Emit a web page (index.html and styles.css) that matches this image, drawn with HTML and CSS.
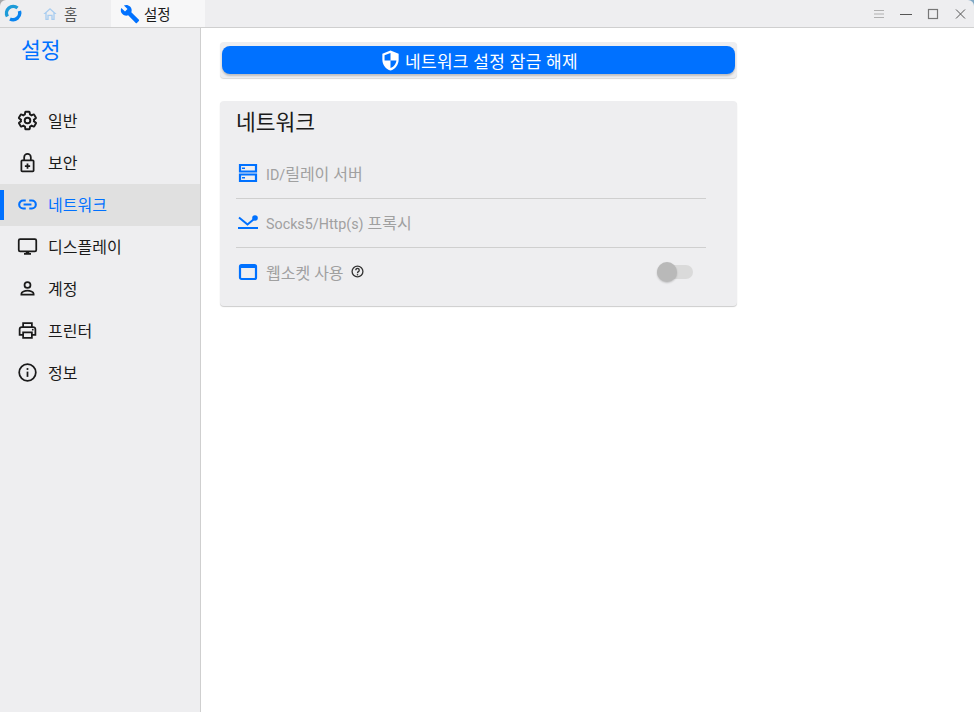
FILE: index.html
```html
<!DOCTYPE html>
<html lang="ko">
<head>
<meta charset="utf-8">
<title>설정</title>
<link rel="stylesheet" href="styles.css">
</head>
<body>
<div class="window">
  <header class="titlebar">
    <svg class="logo" viewBox="0 0 18 18" width="18" height="18"><path d="M3.400 12.500A6.700 6.700 0 0 1 13.500 4" fill="none" stroke="#1d9bd8" stroke-width="3.400"/><path d="M15.400 7A6.700 6.700 0 0 1 6 15" fill="none" stroke="#0a84f0" stroke-width="3.400"/></svg>
    <div class="tab tab-home">
      <svg viewBox="0 0 24 24" width="16" height="16"><path d="M12 3 2 12h3v9h5v-6h4v6h5v-9h3z M7 19v-8.800l5-4.500 5 4.500V19h-1v-6H8v6z" fill="#a9cdf0" fill-rule="evenodd"/></svg>
      <span>홈</span>
    </div>
    <div class="tab tab-active">
      <svg viewBox="0 0 24 24" width="20" height="20"><path d="M22.700 19 13.600 9.900c.9-2.300.4-5-1.500-6.900-2-2-5-2.400-7.400-1.300L9 6 6 9 1.600 4.700C.4 7.100.9 10.100 2.900 12.100c1.900 1.900 4.600 2.400 6.900 1.500l9.100 9.100c.4.400 1 .4 1.400 0l2.300-2.300c.5-.4.500-1.100.1-1.400z" fill="#0071ff"/></svg>
      <span>설정</span>
    </div>
    <div class="spacer"></div>
    <div class="winctl">
      <svg viewBox="0 0 12 12" width="12" height="12"><path d="M1 2.500h10M1 6h10M1 9.500h10" stroke="#b0b0b0" stroke-width="1"/></svg>
      <svg viewBox="0 0 12 12" width="12" height="12"><path d="M0 6.500h12" stroke="#555" stroke-width="1"/></svg>
      <svg viewBox="0 0 12 12" width="12" height="12"><rect x="1.500" y="1.500" width="9" height="9" fill="none" stroke="#777" stroke-width="1.200"/></svg>
      <svg viewBox="0 0 12 12" width="12" height="12"><path d="M2 1.500l9 9M11 1.500l-9 9" stroke="#555" stroke-width="1"/></svg>
    </div>
  </header>
  <div class="body">
    <aside class="sidebar">
      <div class="side-title">설정</div>
      <nav class="nav">
        <div class="nav-item">
          <svg class="nav-icon" viewBox="0 0 24 24"><path d="M19.400 13c.1-.3.1-.7.1-1s0-.7-.1-1l2.100-1.600c.2-.2.2-.4.1-.6l-2-3.500c-.1-.2-.4-.3-.6-.2l-2.500 1c-.5-.4-1.100-.7-1.700-1l-.4-2.700c0-.2-.2-.4-.5-.4h-4c-.2 0-.4.2-.5.4l-.4 2.700c-.6.3-1.200.6-1.700 1l-2.500-1c-.2-.1-.5 0-.6.2l-2 3.500c-.1.2-.1.4.1.6L4.500 11c-.1.3-.1.7-.1 1s0 .7.1 1l-2.100 1.600c-.2.2-.2.4-.1.6l2 3.500c.1.2.4.3.6.2l2.500-1c.5.4 1.100.7 1.700 1l.4 2.700c0 .2.2.4.5.4h4c.2 0 .4-.2.5-.4l.4-2.700c.6-.3 1.200-.6 1.700-1l2.500 1c.2.1.5 0 .6-.2l2-3.500c.1-.2.1-.4-.1-.6z" fill="none" stroke="#1a1a1a" stroke-width="2.200"/><circle cx="12" cy="12" r="3.200" fill="none" stroke="#1a1a1a" stroke-width="2.200"/></svg>
          <span>일반</span>
        </div>
        <div class="nav-item">
          <svg class="nav-icon" viewBox="0 0 24 24"><path d="M6 9.500h12a1 1 0 0 1 1 1V21a1 1 0 0 1-1 1H6a1 1 0 0 1-1-1V10.500a1 1 0 0 1 1-1z M8.200 9.500V6a3.800 3.800 0 0 1 7.600 0v3.500 M12 13v6 M9 16h6" fill="none" stroke="#1a1a1a" stroke-width="2"/></svg>
          <span>보안</span>
        </div>
        <div class="nav-item selected">
          <svg class="nav-icon" viewBox="0 0 24 24"><path d="M10 7.500H7a4.500 4.500 0 0 0 0 9h3 M14 7.500h3a4.500 4.500 0 0 1 0 9h-3 M7.500 12h9" fill="none" stroke="#0071ff" stroke-width="2.400"/></svg>
          <span>네트워크</span>
        </div>
        <div class="nav-item">
          <svg class="nav-icon" viewBox="0 0 24 24"><path d="M3.500 3.500h17a1.500 1.500 0 0 1 1.500 1.500v11a1.500 1.500 0 0 1-1.500 1.500h-17A1.500 1.500 0 0 1 2 16V5a1.500 1.500 0 0 1 1.500-1.500z" fill="none" stroke="#1a1a1a" stroke-width="2"/><path d="M10 17.500h4v2h2v2H8v-2h2z" fill="#1a1a1a"/></svg>
          <span>디스플레이</span>
        </div>
        <div class="nav-item">
          <svg class="nav-icon" viewBox="0 0 24 24"><circle cx="12" cy="8" r="3.400" fill="none" stroke="#1a1a1a" stroke-width="2"/><path d="M5 19v-1c0-2 4-3.500 7-3.500s7 1.500 7 3.500v1z" fill="none" stroke="#1a1a1a" stroke-width="2"/></svg>
          <span>계정</span>
        </div>
        <div class="nav-item">
          <svg class="nav-icon" viewBox="0 0 24 24"><path d="M7 8V3.500h10V8 M7 17H3v-6.500A2.500 2.500 0 0 1 5.500 8h13a2.500 2.500 0 0 1 2.500 2.500V17h-4 M7 14h10v6.500H7z" fill="none" stroke="#1a1a1a" stroke-width="2"/><circle cx="18" cy="11" r="1" fill="#1a1a1a"/></svg>
          <span>프린터</span>
        </div>
        <div class="nav-item">
          <svg class="nav-icon" viewBox="0 0 24 24"><circle cx="12" cy="12" r="9.500" fill="none" stroke="#1a1a1a" stroke-width="2"/><path d="M12 11v6" stroke="#1a1a1a" stroke-width="2"/><circle cx="12" cy="8" r="1.200" fill="#1a1a1a"/></svg>
          <span>정보</span>
        </div>
      </nav>
    </aside>
    <main class="main">
      <section class="unlock-card">
        <button class="unlock-btn">
          <svg viewBox="0 0 24 24" width="23" height="23"><path d="M12 1.500 3.500 5v6c0 5.400 3.600 10.300 8.500 11.500 4.900-1.200 8.500-6.100 8.500-11.500V5z" fill="#fff"/><path d="M12 4.200v7.800H5.800V6.500zM12 12h6.200c-.5 3.700-3 6.900-6.200 7.900z" fill="#0071ff"/></svg>
          <span>네트워크 설정 잠금 해제</span>
        </button>
      </section>
      <section class="card">
        <h2 class="card-title">네트워크</h2>
        <div class="row row-first">
          <svg class="row-icon" viewBox="0 0 20 20"><path d="M2 2h16v6.500H2z M2 11.500h16V18H2z" fill="none" stroke="#0071ff" stroke-width="2.200"/><path d="M4 4.500h3v1.500H4zM4 14h3v1.500H4z" fill="#0071ff"/></svg>
          <span class="label"><span class="latin">ID/</span>릴레이 서버</span>
        </div>
        <div class="row">
          <svg class="row-icon" viewBox="0 0 20 20"><path d="M0 16h20" stroke="#0071ff" stroke-width="2"/><path d="M1 5.500l8.500 7 6-5" fill="none" stroke="#0071ff" stroke-width="2"/><circle cx="17" cy="6" r="2.800" fill="#0071ff"/></svg>
          <span class="label"><span class="latin">Socks5/Http(s)</span> 프록시</span>
        </div>
        <div class="row row-last">
          <svg class="row-icon" viewBox="0 0 20 20"><rect x="2" y="3" width="16" height="14" rx="1.500" fill="none" stroke="#0071ff" stroke-width="2.200"/><path d="M2 5h16" stroke="#0071ff" stroke-width="2"/></svg>
          <span class="label">웹소켓 사용</span>
          <svg class="help" viewBox="0 0 24 24" width="13" height="13"><circle cx="12" cy="12" r="10" fill="none" stroke="#333" stroke-width="2.400"/><path d="M8.800 9.500a3.200 3.200 0 1 1 4.800 2.800c-1 .6-1.600 1.200-1.600 2.700" fill="none" stroke="#333" stroke-width="2.400"/><circle cx="12" cy="18" r="1.500" fill="#333"/></svg>
          <div class="toggle"><div class="knob"></div></div>
        </div>
      </section>
    </main>
  </div>
</div>
</body>
</html>
```
FILE: styles.css
```css
* { box-sizing: border-box; }
html, body { margin: 0; padding: 0; height: 100%; }
body {
  background: #fff;
  font-family: Roboto, "Noto Sans CJK KR", sans-serif;
  color: #1a1a1a;
  overflow: hidden;
}
.window {
  width: 974px;
  height: 712px;
  display: flex;
  flex-direction: column;
  background: linear-gradient(90deg, #a8a8a8 50%, #7fa8c4 50%);
}
.titlebar {
  height: 28px;
  flex: none;
  display: flex;
  align-items: center;
  background: #eeeef0;
  border-bottom: 1px solid #cfcfcf;
  border-radius: 6px 6px 0 0;
}
.logo { margin-left: 4px; margin-top: -1px; width: 18px; flex: none; }
.tab { height: 27px; display: flex; align-items: center; font-size: 14.5px; }
.tab-home { margin-left: 20px; width: 69px; gap: 6px; color: #555; }
.tab-active { width: 94px; padding-left: 9px; gap: 4px; background: #f7f7f8; color: #1a1a1a; }
.spacer { flex: 1; }
.winctl { display: flex; align-items: center; gap: 15px; padding-right: 8px; padding-top: 1px; }
.winctl svg { display: block; }
.body { flex: 1; display: flex; min-height: 0; background: #fff; }
.sidebar {
  width: 201px;
  flex: none;
  background: #eeeef0;
  border-right: 1px solid #cfcfcf;
}
.side-title {
  height: 72px;
  padding: 8px 0 0 21px;
  font-size: 21.5px;
  line-height: 30px;
  color: #0071ff;
}
.nav { display: flex; flex-direction: column; }
.nav-item {
  position: relative;
  height: 42px;
  display: flex;
  align-items: center;
  gap: 10px;
  padding: 0 0 2px 17px;
  font-size: 16px;
  color: #1a1a1a;
}
.nav-item.selected { background: #e0e0e0; color: #0071ff; }
.nav-item.selected::before {
  content: "";
  position: absolute;
  left: 0;
  top: 6px;
  width: 4px;
  height: 30px;
  background: #0071ff;
}
.nav-icon { width: 21px; height: 21px; flex: none; }
.main { flex: 1; padding: 14px 0 0 19px; }
.unlock-card {
  width: 517px;
  height: 36px;
  padding: 4px 2px 0;
  background: #eeeef0;
  border-radius: 4px;
  box-shadow: 0 1px 1px rgba(0, 0, 0, .15);
}
.unlock-btn {
  width: 100%;
  height: 28px;
  display: flex;
  align-items: center;
  justify-content: center;
  gap: 3px;
  padding: 0;
  border: 0;
  border-radius: 8px;
  background: #0071ff;
  color: #fff;
  font: inherit;
  font-size: 17px;
  letter-spacing: 0.3px;
  box-shadow: 0 2px 2px rgba(0, 0, 0, .2);
}
.card {
  width: 517px;
  height: 205px;
  margin-top: 23px;
  padding: 0 31px 0 16px;
  background: #eeeef0;
  border-radius: 4px;
  box-shadow: 0 1px 1px rgba(0, 0, 0, .2);
}
.card-title {
  margin: 0;
  height: 47px;
  padding-top: 6px;
  font-size: 21.5px;
  line-height: 32px;
  font-weight: 400;
}
.row {
  height: 49px;
  display: flex;
  align-items: center;
  padding: 0 13px 2px 2px;
  border-bottom: 1px solid #cfcfcf;
}
.row-first { height: 51px; padding-bottom: 0; }
.row-last { border-bottom: 0; }
.row-icon { width: 20px; height: 20px; flex: none; margin-right: 8px; }
.label { font-size: 16px; color: #a0a0a0; }
.latin { font-size: 14.3px; }
.help { margin-left: 7px; flex: none; }
.toggle {
  position: relative;
  width: 36px;
  height: 14px;
  margin-left: auto;
  border-radius: 7px;
  background: #dadada;
}
.knob {
  position: absolute;
  left: 0;
  top: -3px;
  width: 20px;
  height: 20px;
  border-radius: 50%;
  background: #b9b9b9;
  box-shadow: 0 1px 2px rgba(0, 0, 0, .2);
}
```
